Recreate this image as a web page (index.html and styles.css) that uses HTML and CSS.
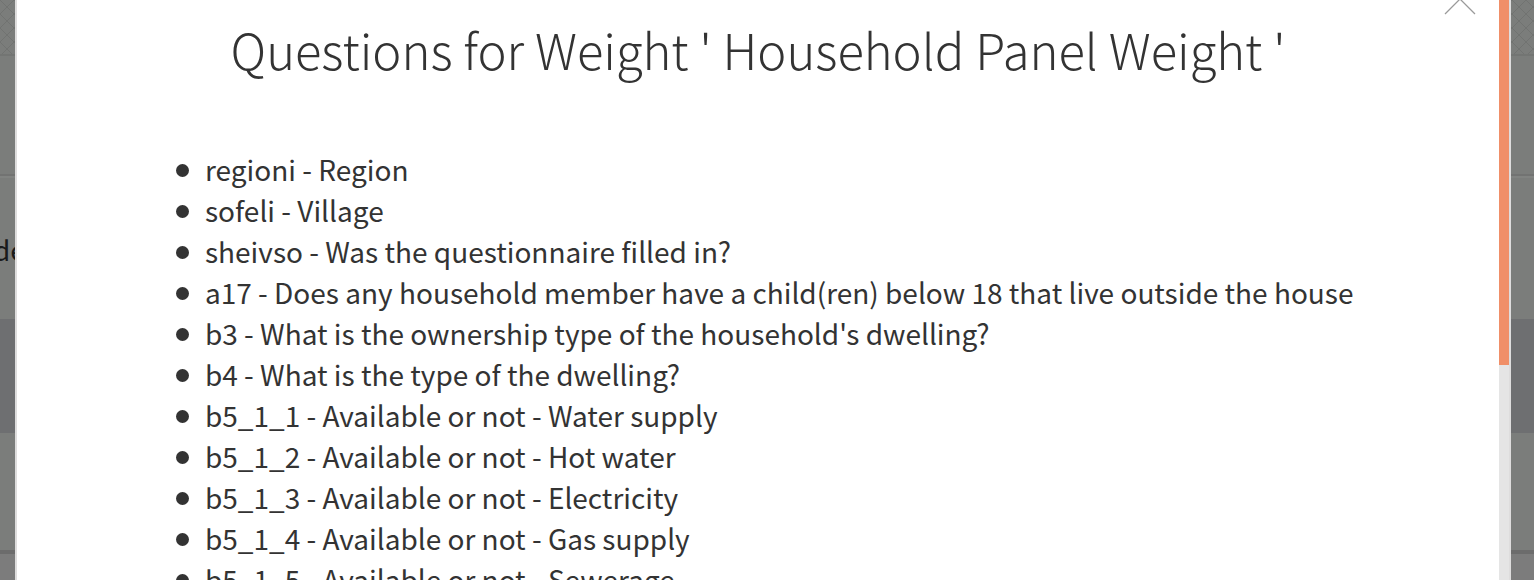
FILE: index.html
```html
<!DOCTYPE html>
<html lang="en">
<head>
<meta charset="utf-8">
<title>Questions for Weight</title>
<link rel="stylesheet" href="styles.css">
</head>
<body>
<div class="page" aria-hidden="true">
  <svg class="hatch" width="100%" height="54">
    <defs>
      <pattern id="net" width="14" height="14" patternUnits="userSpaceOnUse">
        <path d="M0 0L14 14M14 0L0 14" stroke="#717371" stroke-width="1"/>
      </pattern>
    </defs>
    <rect width="100%" height="54" fill="url(#net)"/>
  </svg>
  <div class="strip"></div>
  <div class="intro">de</div>
  <div class="band"></div>
  <div class="section"></div>
  <div class="footer"></div>
</div>
<div class="modal" role="dialog" aria-labelledby="title">
  <div class="content">
    <button class="close" type="button" aria-label="Close">
      <svg width="32" height="32" viewBox="0 0 32 32"><path d="M1 1L31 31M31 1L1 31" fill="none" stroke="#9a9a9a" stroke-width="1.3"/></svg>
    </button>
    <h1 class="title" id="title">Questions for Weight ' Household Panel Weight '</h1>
    <ul class="questions">
      <li>regioni - Region</li>
      <li>sofeli - Village</li>
      <li>sheivso - Was the questionnaire filled in?</li>
      <li>a17 - Does any household member have a child(ren) below 18 that live outside the house</li>
      <li>b3 - What is the ownership type of the household's dwelling?</li>
      <li>b4 - What is the type of the dwelling?</li>
      <li>b5_1_1 - Available or not - Water supply</li>
      <li>b5_1_2 - Available or not - Hot water</li>
      <li>b5_1_3 - Available or not - Electricity</li>
      <li>b5_1_4 - Available or not - Gas supply</li>
      <li>b5_1_5 - Available or not - Sewerage</li>
    </ul>
  </div>
  <div class="track"><div class="thumb"></div></div>
</div>
</body>
</html>
```
FILE: styles.css
```css
* { box-sizing: border-box; }
body {
  margin: 0;
  height: 100vh;
  overflow: hidden;
  background: #7b7d7b;
  color: #333;
  font-family: "Noto Sans CJK SC", "Open Sans", sans-serif;
}
.page {
  display: flex;
  flex-direction: column;
  height: 100vh;
  overflow: hidden;
}
.page > * { flex-shrink: 0; }
.hatch { display: block; }
.strip {
  height: 122px;
  border-top: 2px solid #737573;
  border-bottom: 2px solid #727372;
}
.intro {
  height: 143px;
  padding-top: 51px;
  border-top: 2px solid #818381;
  color: #1a1a1a;
  font-size: 28px;
  line-height: 40px;
  text-indent: -7px;
}
.band { height: 114px; background: #6e6f71; }
.section { height: 121px; border-bottom: 4px solid #6c6c6c; }
.footer { flex: 1; background: #7c7c7c; }
.modal {
  position: fixed;
  inset: 0 23px 0 15px;
  display: flex;
  overflow: hidden;
  border: solid #dedddd;
  border-width: 0 2px;
  background: #fff;
}
.content { position: relative; flex: 1; }
.close {
  position: absolute;
  top: -17px;
  right: 23px;
  padding: 0;
  border: 0;
  background: none;
}
.close svg { display: block; }
.title {
  margin: 0;
  padding-top: 13px;
  font-size: 49px;
  font-weight: 300;
  line-height: 72px;
  text-align: center;
}
.questions {
  margin: 64px 0 0;
  padding: 0 0 0 188px;
  font-size: 28px;
  line-height: 41px;
  list-style: none;
}
.questions li {
  display: flex;
  align-items: center;
  white-space: nowrap;
}
.questions li::before {
  content: "";
  width: 13px;
  height: 13px;
  margin: 2px 16px 0 -29px;
  border-radius: 50%;
  background: #333;
}
.track { width: 10px; background: #e5e5e5; }
.thumb { height: 63%; background: #f08f68; }
```
